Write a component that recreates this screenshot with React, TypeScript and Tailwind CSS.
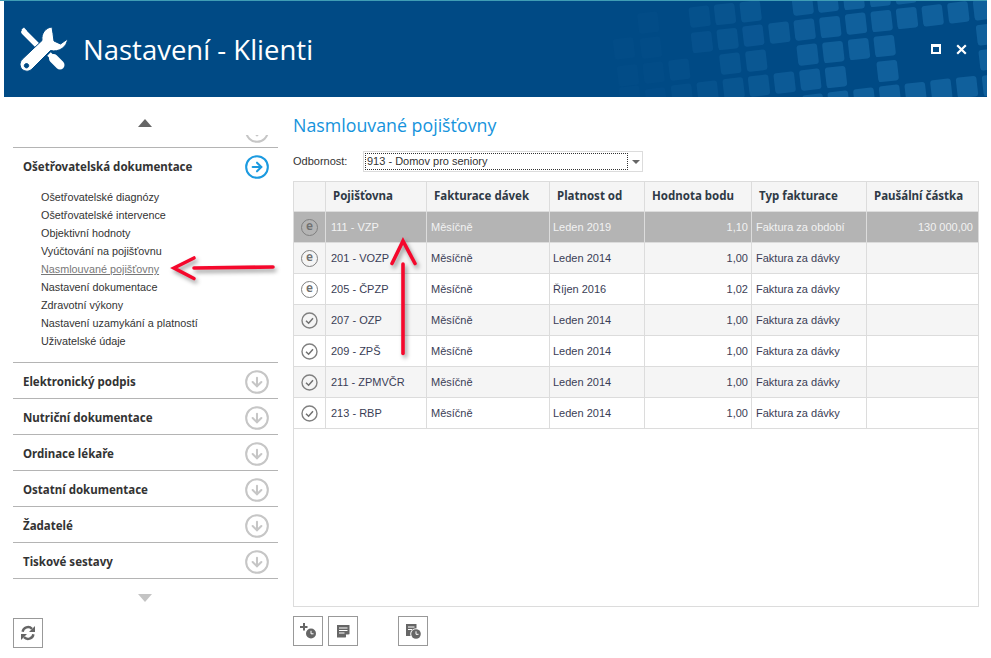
import { CircleArrowDown, CircleArrowRight } from "lucide-react";

// centres of the header tiles, measured on the 3x crop starting at x=560
const tiles = [
  [192, 145], [265, 68], [273, 143], [204, 226], [281, 218], [358, 209], [210, 290], [288, 295],
  [419, 50], [495, 42], [572, 34], [426, 126], [503, 117], [580, 107], [511, 191], [589, 182],
  [366, 284], [443, 275], [521, 265], [597, 257], [674, 248], [751, 239], [828, 231],
  [658, 98], [734, 89], [811, 81], [888, 71], [965, 63], [1041, 54], [1118, 46], [1195, 37], [1272, 28],
  [728, 14], [803, 5], [881, -3], [959, -12], [1036, -20],
  [743, 164], [820, 156], [897, 147], [974, 138], [983, 213], [1281, 103], [1289, 178], [1299, 255],
  [760, 314], [836, 305], [913, 296], [990, 287], [1067, 279], [1144, 269], [1221, 261],
];

const ScreenTiles = () => (
  <svg className="absolute inset-0 w-[983px] h-[96px]" viewBox="0 0 983 96">
    {tiles.map(([cx, cy], i) => {
      const x = cx / 3 + 556;
      const y = cy / 3 - 1;
      const o = Math.min(0.28, Math.max(0.03, ((x - 625) / 210) * 0.28));
      return (
        <rect
          key={i}
          x={x - 10.3}
          y={y - 10.3}
          width="20.6"
          height="20.6"
          rx="3"
          fill="#3a9ad8"
          opacity={o}
          transform={`rotate(-6.5 ${x} ${y})`}
        />
      );
    })}
  </svg>
);

const ToolsIcon = () => (
  <svg width="60" height="58" viewBox="0 0 60 58" className="shrink-0">
    <path d="M9 12 L23 26" stroke="#fff" strokeWidth="5.5" strokeLinecap="round" />
    <path d="M6.5 9.5 L9 7.5 L12 11 L10 13 Z" fill="#fff" />
    <path d="M34 34 L38 38" stroke="#fff" strokeWidth="5" />
    <path d="M38.5 38.5 L45 45" stroke="#fff" strokeWidth="9" strokeLinecap="round" />
    <path
      fillRule="evenodd"
      d="M37 7 C31 7.5 26 13 27 20.5 L7.5 39 C4 42.5 4.5 47 7.5 49.5 C10.5 52 14.5 51.5 17 49 L35.5 30.5 C44 32.5 52 27 52.5 19 L45.5 24 L39 21 L38 13.5 Z M11.5 43.5 a2.2 2.2 0 1 0 0.01 0 Z"
      fill="#fff"
      stroke="#004a85"
      strokeWidth="1"
    />
  </svg>
);

const menuItems = [
  "Ošetřovatelské diagnózy",
  "Ošetřovatelské intervence",
  "Objektivní hodnoty",
  "Vyúčtování na pojišťovnu",
  "Nasmlouvané pojišťovny",
  "Nastavení dokumentace",
  "Zdravotní výkony",
  "Nastavení uzamykání a platností",
  "Uživatelské údaje",
];

const sections = [
  "Elektronický podpis",
  "Nutriční dokumentace",
  "Ordinace lékaře",
  "Ostatní dokumentace",
  "Žadatelé",
  "Tiskové sestavy",
];

const rows = [
  { icon: "e", name: "111 - VZP", od: "Leden 2019", bod: "1,10", typ: "Faktura za období", castka: "130 000,00" },
  { icon: "e", name: "201 - VOZP", od: "Leden 2014", bod: "1,00", typ: "Faktura za dávky", castka: "" },
  { icon: "e", name: "205 - ČPZP", od: "Říjen 2016", bod: "1,02", typ: "Faktura za dávky", castka: "" },
  { icon: "c", name: "207 - OZP", od: "Leden 2014", bod: "1,00", typ: "Faktura za dávky", castka: "" },
  { icon: "c", name: "209 - ZPŠ", od: "Leden 2014", bod: "1,00", typ: "Faktura za dávky", castka: "" },
  { icon: "c", name: "211 - ZPMVČR", od: "Leden 2014", bod: "1,00", typ: "Faktura za dávky", castka: "" },
  { icon: "c", name: "213 - RBP", od: "Leden 2014", bod: "1,00", typ: "Faktura za dávky", castka: "" },
];

const StatusIcon = ({ kind }: { kind: string }) =>
  kind === "e" ? (
    <div className="w-[17px] h-[17px] rounded-full border-[1.5px] border-[#808080] flex items-center justify-center font-['Noto_Sans',sans-serif] text-[12px] leading-none font-semibold text-[#707070] pb-[2px]">
      e
    </div>
  ) : (
    <svg width="17" height="17" viewBox="0 0 17 17">
      <circle cx="8.5" cy="8.5" r="7.5" fill="none" stroke="#808080" strokeWidth="1.4" />
      <path d="M5 8.8 L7.6 11.2 L12 6.2" fill="none" stroke="#707070" strokeWidth="1.5" />
    </svg>
  );

const RefreshIcon = () => (
  <svg width="16" height="16" viewBox="0 0 16 16">
    <path d="M2.6 6.8 A5.5 5.5 0 0 1 12 3.8" fill="none" stroke="#666" strokeWidth="2.4" />
    <path d="M15 1 V7 H9 Z" fill="#666" />
    <path d="M13.4 9.2 A5.5 5.5 0 0 1 4 12.2" fill="none" stroke="#666" strokeWidth="2.4" />
    <path d="M1 15 V9 H7 Z" fill="#666" />
  </svg>
);

const cols = "grid grid-cols-[32px_101px_123px_95px_107px_115px_111px]";
const boldText = "font-['Noto_Sans',sans-serif] font-bold text-[11.5px]";

const App = () => {
  return (
    <div className="relative w-[991px] h-[658px] bg-white overflow-hidden font-['Liberation_Sans',sans-serif] text-[11px] text-[#333]">
      <div className="h-px w-[987px] bg-[#3f9db5]"></div>
      <div className="relative ml-1 w-[983px] h-[96px] bg-[#004a85] flex items-center pl-[11px] pr-[20px] overflow-hidden">
        <ScreenTiles />
        <div className="relative flex items-center">
          <ToolsIcon />
          <span className="ml-[8px] pt-[2px] text-[27.5px] text-white font-['Open_Sans',sans-serif]">Nastavení - Klienti</span>
        </div>
        <div className="relative ml-auto flex items-center gap-[15px]">
          <div className="w-[10px] h-[10px] border-2 border-t-[3px] border-white"></div>
          <svg width="11" height="11" viewBox="0 0 11 11">
            <path d="M1.2 1.2 L9.8 9.8 M9.8 1.2 L1.2 9.8" stroke="#fff" strokeWidth="2.2" />
          </svg>
        </div>
      </div>

      <div className="flex pl-[13px]">
        {/* left menu */}
        <div className="w-[265px] shrink-0">
          <div className="h-[38px] flex justify-center pt-[22px] pr-[1px]">
            <div className="w-0 h-0 border-x-[7px] border-x-transparent border-b-[8px] border-b-[#666]"></div>
          </div>
          <div className="h-[13px] border-b border-[#b4b4b4] overflow-hidden">
            <div className="flex justify-end pr-[8px] -mt-[17px]">
              <CircleArrowDown size={26} strokeWidth={1.9} className="text-[#c6c6c6]" />
            </div>
          </div>
          <div className="border-b border-[#b4b4b4] pb-[12px]">
            <div className="h-[40px] flex items-center justify-between pb-[2px] pl-[10px] pr-[8px]">
              <span className={boldText}>Ošetřovatelská dokumentace</span>
              <CircleArrowRight size={26} strokeWidth={1.9} className="text-[#1b9ae0]" />
            </div>
            <div className="pl-[28px] text-[10.8px]">
              {menuItems.map((item) => (
                <div
                  key={item}
                  className={
                    item === "Nasmlouvané pojišťovny" ? "h-[18px] leading-[18px] text-[#777] underline" : "h-[18px] leading-[18px]"
                  }
                >
                  {item}
                </div>
              ))}
            </div>
          </div>
          {sections.map((s) => (
            <div key={s} className="h-[36px] border-b border-[#b4b4b4] flex items-center justify-between pt-[2px] pl-[10px] pr-[8px]">
              <span className={boldText}>{s}</span>
              <CircleArrowDown size={26} strokeWidth={1.9} className="text-[#c6c6c6]" />
            </div>
          ))}
          <div className="h-[39px] flex justify-center pt-[15px] pr-[1px]">
            <div className="w-0 h-0 border-x-[7px] border-x-transparent border-t-[8px] border-t-[#c4c4c4]"></div>
          </div>
          <button className="w-[30px] h-[30px] border border-[#999] flex items-center justify-center">
            <RefreshIcon />
          </button>
        </div>

        {/* main panel */}
        <div className="ml-[15px] w-[686px]">
          <div className="mt-[14px] h-[28px] leading-[28px] text-[17.8px] text-[#1593dc] font-['Open_Sans',sans-serif]">Nasmlouvané pojišťovny</div>
          <div className="mt-[12px] flex items-center h-[21px]">
            <span className="w-[70px]">Odbornost:</span>
            <div className="w-[280px] h-[21px] border border-[#dcdcdc] flex items-center pl-[1px] pr-[1px]">
              <div className="w-[263px] h-[17px] leading-[14px] pl-[1px] border border-dotted border-[#333]">913 - Domov pro seniory</div>
              <div className="ml-auto mr-[1px] w-0 h-0 border-x-[4px] border-x-transparent border-t-[4px] border-t-[#666]"></div>
            </div>
          </div>

          <div className="mt-[9px] w-[686px] h-[426px] border border-[#dcdcdc]">
            <div className={`${cols} h-[30px] bg-[#f5f5f5] border-b border-[#dcdcdc] ${boldText} text-[#2f3a46]`}>
              <div className="border-r border-[#dcdcdc]"></div>
              <div className="border-r border-[#dcdcdc] pl-[7px] leading-[28px]">Pojišťovna</div>
              <div className="border-r border-[#dcdcdc] pl-[7px] leading-[28px]">Fakturace dávek</div>
              <div className="border-r border-[#dcdcdc] pl-[7px] leading-[28px]">Platnost od</div>
              <div className="border-r border-[#dcdcdc] pl-[7px] leading-[28px]">Hodnota bodu</div>
              <div className="border-r border-[#dcdcdc] pl-[7px] leading-[28px]">Typ fakturace</div>
              <div className="pl-[7px] leading-[28px]">Paušální částka</div>
            </div>
            {rows.map((r, i) => (
              <div
                key={r.name}
                className={
                  i === 0
                    ? `${cols} h-[31px] leading-[30px] border-b border-[#dcdcdc] bg-[#b4b4b4] text-[#f2f2f2]`
                    : i % 2 === 1
                      ? `${cols} h-[31px] leading-[30px] border-b border-[#dcdcdc] bg-[#f5f5f5] text-[#3a3d55]`
                      : `${cols} h-[31px] leading-[30px] border-b border-[#dcdcdc] bg-white text-[#3a3d55]`
                }
              >
                <div className="border-r border-[#dcdcdc] flex items-center justify-center">
                  <StatusIcon kind={r.icon} />
                </div>
                <div className="border-r border-[#dcdcdc] pl-[5px]">{r.name}</div>
                <div className="border-r border-[#dcdcdc] pl-[4px]">Měsíčně</div>
                <div className="border-r border-[#dcdcdc] pl-[3px]">{r.od}</div>
                <div className="border-r border-[#dcdcdc] pr-[3px] text-right">{r.bod}</div>
                <div className="border-r border-[#dcdcdc] pl-[4px]">{r.typ}</div>
                <div className="pr-[5px] text-right">{r.castka}</div>
              </div>
            ))}
          </div>

          <div className="mt-[9px] flex">
            <button className="w-[30px] h-[30px] border border-[#999]">
              <svg width="28" height="28" viewBox="1 1 28 28">
                <path d="M11 7 V14.5 M7 11 H14.5" stroke="#666" strokeWidth="2" />
                <circle cx="18" cy="17.5" r="5" fill="#666" />
                <path d="M18 14.8 V17.8 H20.5" fill="none" stroke="#fff" strokeWidth="1" />
              </svg>
            </button>
            <button className="ml-[5px] w-[30px] h-[30px] border border-[#999]">
              <svg width="28" height="28" viewBox="1 1 28 28">
                <path d="M9 9 H21.5 V18 L17.5 21.5 H9 Z" fill="#666" />
                <path d="M11 12 H19.5 M11 14.5 H19.5 M11 17 H16.5" stroke="#fff" strokeWidth="1" />
                <path d="M18 21.5 L18 18.5 H21.5 Z" fill="#fff" />
              </svg>
            </button>
            <button className="ml-[40px] w-[30px] h-[30px] border border-[#999]">
              <svg width="28" height="28" viewBox="1 1 28 28">
                <path d="M8 8 H18.5 V20 H8 Z" fill="#666" />
                <path d="M10 11 H16.5 M10 13.5 H14" stroke="#fff" strokeWidth="1" />
                <circle cx="18" cy="18" r="5.8" fill="#fff" />
                <circle cx="18" cy="18" r="4.8" fill="#666" />
                <path d="M18 15.3 V18.3 H20.5" fill="none" stroke="#fff" strokeWidth="1" />
              </svg>
            </button>
          </div>
        </div>
      </div>

      {/* red annotation arrows */}
      <svg className="absolute inset-0 w-[991px] h-[658px] pointer-events-none drop-shadow-[2px_3px_2px_rgba(0,0,0,0.4)]" viewBox="0 0 991 658">
        <g fill="none" stroke="#f5082c" strokeWidth="3.6" strokeLinecap="round" strokeLinejoin="miter">
          <path d="M194 268 L273 267" />
          <path d="M194 258 L174 268 L194 278.5" />
          <path d="M403 264 L403 353.5" />
          <path d="M392 263.5 L403 241 L415 263.5" />
        </g>
      </svg>
    </div>
  );
};

export default App;
